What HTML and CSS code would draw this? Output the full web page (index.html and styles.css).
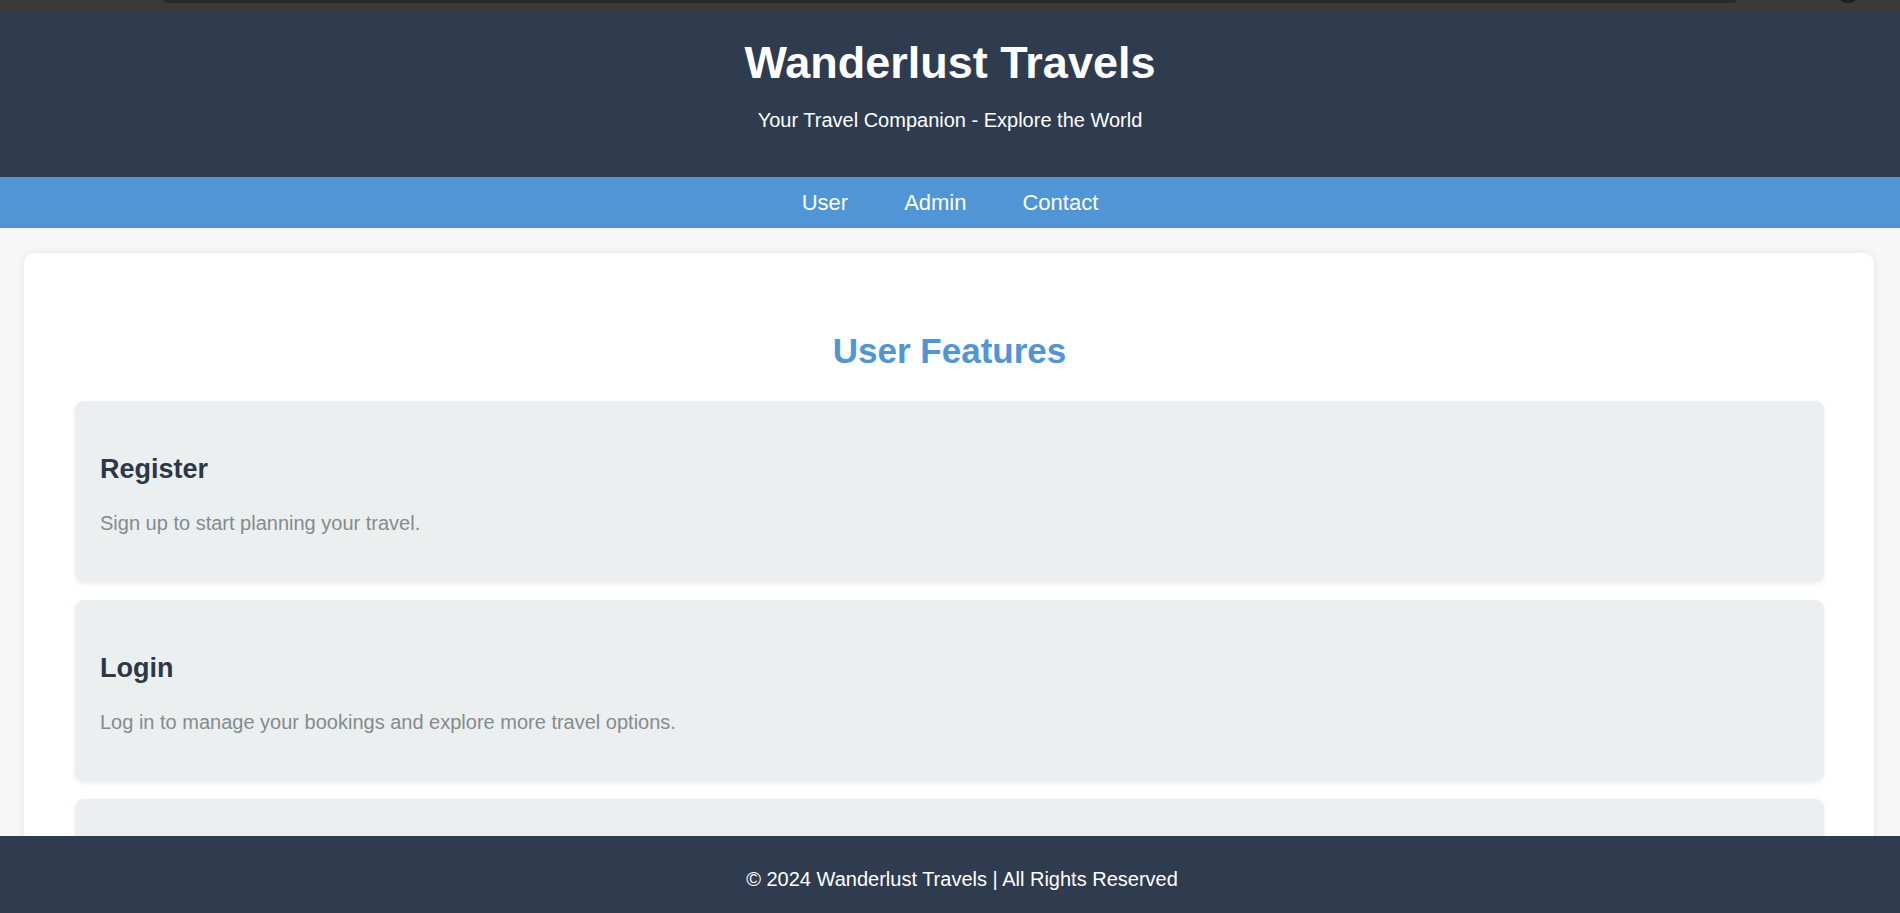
FILE: index.html
```html
<!DOCTYPE html>
<html lang="en">
<head>
<meta charset="utf-8">
<title>Wanderlust Travels</title>
<link rel="stylesheet" href="styles.css">
</head>
<body>
<div class="chrome"><div class="chrome-bar"></div><div class="chrome-dot"></div></div>
<header class="site-header">
  <h1 class="site-title">Wanderlust Travels</h1>
  <p class="site-tagline">Your Travel Companion - Explore the World</p>
</header>
<nav class="site-nav">
  <a href="#" class="nav-link">User</a>
  <a href="#" class="nav-link">Admin</a>
  <a href="#" class="nav-link">Contact</a>
</nav>
<main class="content">
  <h2 class="section-title">User Features</h2>
  <section class="feature">
    <h3 class="feature-title">Register</h3>
    <p class="feature-text">Sign up to start planning your travel.</p>
  </section>
  <section class="feature">
    <h3 class="feature-title">Login</h3>
    <p class="feature-text">Log in to manage your bookings and explore more travel options.</p>
  </section>
  <section class="feature">
    <h3 class="feature-title">Search Destinations</h3>
    <p class="feature-text">Find the best places to visit around the world.</p>
  </section>
</main>
<footer class="site-footer">
  <p class="footer-text">&copy; 2024 Wanderlust Travels | All Rights Reserved</p>
</footer>
</body>
</html>
```
FILE: styles.css
```css
html, body {
  margin: 0;
  padding: 0;
}

body {
  background: #f7f7f7;
  font-family: "Liberation Sans", Arial, sans-serif;
  color: #2c3e50;
  padding-bottom: 100px;
}

.chrome {
  height: 12px;
  background: #3a3a3a;
  position: relative;
}

.chrome-bar {
  margin-left: 164px;
  width: 1572px;
  height: 3px;
  background: #2a2a2a;
  border-radius: 0 0 4px 4px;
}

.chrome-dot {
  position: absolute;
  top: -6px;
  left: 1840px;
  width: 16px;
  height: 9px;
  border-radius: 50%;
  background: #1e1e1e;
}

.site-header {
  background: #2f3c4f;
  color: #ffffff;
  text-align: center;
  padding: 25px 0;
}

.site-title {
  margin: 0 0 21px;
  font-size: 45px;
  line-height: 51px;
  font-weight: bold;
}

.site-tagline {
  margin: 0 0 20px;
  font-size: 20px;
}

.site-nav {
  background: #5095d5;
  display: flex;
  justify-content: center;
  gap: 56px;
  padding: 13px 0;
}

.nav-link {
  color: #ffffff;
  text-decoration: none;
  font-size: 22px;
  line-height: 25px;
}

.content {
  margin: 25px 26px 0 24px;
  background: #ffffff;
  border-radius: 10px;
  box-shadow: 0 0 10px rgba(0, 0, 0, 0.08);
  padding: 50px 50px 30px 51px;
}

.section-title {
  margin: 28px 0 30px;
  text-align: center;
  color: #5095d5;
  font-size: 35px;
  font-weight: bold;
}

.feature {
  background: #ebeff0;
  border-radius: 9px;
  box-shadow: 0 2px 5px rgba(0, 0, 0, 0.08);
  padding: 25px;
  margin-bottom: 18px;
}

.feature-title {
  margin: 28px 0 27px;
  font-size: 27px;
  font-weight: bold;
  color: #2c3848;
}

.feature-text {
  margin: 0 0 22px;
  font-size: 20px;
  color: #858b8d;
}

.site-footer {
  position: fixed;
  left: 0;
  right: 0;
  bottom: 0;
  height: 77px;
  box-sizing: border-box;
  padding: 10px 0 0 24px;
  background: #2f3c4f;
  color: #ffffff;
  display: flex;
  align-items: center;
  justify-content: center;
}

.footer-text {
  margin: 0;
  font-size: 20px;
}
```
